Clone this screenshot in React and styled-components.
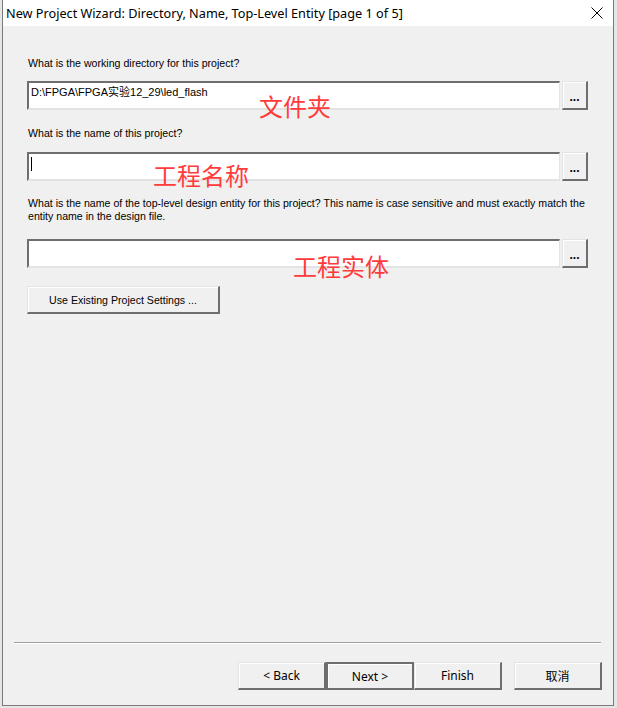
import React from "react";
import styled, { createGlobalStyle } from "styled-components";

const GlobalStyle = createGlobalStyle`
    html, body {
        margin: 0;
        padding: 0;
        background: #e6e6e6;
    }
    body {
        width: 617px;
        height: 708px;
        overflow: hidden;
    }
`

const Page = styled.div`
    padding-left: 2px;
    width: 617px;
    height: 708px;
    box-sizing: border-box;
`

const Window = styled.div`
    width: 612px;
    height: 706px;
    box-sizing: border-box;
    border: 1px solid #7a7a7a;
    border-top: none;
    background: #f0f0f0;
    display: flex;
    flex-direction: column;
    position: relative;
`

const TitleBar = styled.div`
    height: 26px;
    background: #ffffff;
    display: flex;
    align-items: center;
    justify-content: space-between;
    padding: 0 10px 0 3px;
    font-family: "Noto Sans", "Liberation Sans", sans-serif;
    font-size: 12.7px;
    color: #000;
    flex-shrink: 0;
`

const CloseIcon = styled.svg`
    width: 12px;
    height: 12px;
`

const Body = styled.div`
    flex: 1;
    display: flex;
    flex-direction: column;
    padding: 31px 0 15px 24px;
`

const Label = styled.div`
    font-family: "Liberation Sans", Arial, sans-serif;
    font-size: 10.6px;
    line-height: 13px;
    color: #000;
    width: 560px;
    margin-top: ${({ $top }) => $top}px;
    margin-left: 1px;
`

const FieldRow = styled.div`
    display: flex;
    gap: 2px;
    margin-top: ${({ $top }) => $top}px;
`

const TextBox = styled.div`
    width: 533px;
    height: 29px;
    box-sizing: border-box;
    background: #ffffff;
    border-style: solid;
    border-width: 2px 1px 2px 2px;
    border-color: #6e6e6e #e3e3e3 #e3e3e3 #6e6e6e;
    padding: 2px 0 0 2px;
    font-family: "Liberation Sans", "Noto Sans CJK SC", sans-serif;
    font-size: 11px;
    line-height: 14px;
    color: #000;
    white-space: nowrap;
`

const Caret = styled.span`
    display: inline-block;
    width: 1px;
    height: 14px;
    background: #000;
    margin-top: 1px;
`

const RaisedButton = styled.div`
    box-sizing: border-box;
    width: ${({ $w }) => $w}px;
    height: ${({ $h }) => $h || 28}px;
    background: #f0f0f0;
    border-style: solid;
    border-width: 1px 2px 2px 1px;
    border-color: #e3e3e3 #6e6e6e #6e6e6e #e3e3e3;
    box-shadow: inset 1px 1px #ffffff;
    display: flex;
    align-items: center;
    justify-content: center;
    font-family: "Liberation Sans", "Noto Sans CJK SC", sans-serif;
    font-size: 10.6px;
    color: #000;
`

const Dots = styled.span`
    font-weight: bold;
    font-size: 12px;
    margin-top: 3px;
`

const Footer = styled.div`
    margin-top: auto;
    display: flex;
    flex-direction: column;
`

const Separator = styled.div`
    margin-left: -13px;
    width: 587px;
    height: 1px;
    background: #a0a0a0;
    border-bottom: 1px solid #ffffff;
`

const ButtonRow = styled.div`
    display: flex;
    margin-top: 18px;
    padding-left: 211px;
`

const NavButton = styled.div`
    box-sizing: border-box;
    width: 88px;
    height: 28px;
    margin-left: ${({ $gap }) => $gap || 0}px;
    background: #f0f0f0;
    border-style: solid;
    border-width: ${({ $default }) => ($default ? "2px" : "1px 2px 2px 1px")};
    border-color: ${({ $default }) =>
        $default ? "#6e6e6e" : "#e3e3e3 #6e6e6e #6e6e6e #e3e3e3"};
    box-shadow: inset 1px 1px #ffffff;
    display: flex;
    align-items: center;
    justify-content: center;
    font-family: "Noto Sans", "Noto Sans CJK SC", sans-serif;
    font-size: 12px;
    color: #000;
`

const Note = styled.div`
    position: absolute;
    left: ${({ $x }) => $x}px;
    top: ${({ $y }) => $y}px;
    font-family: "Noto Sans CJK SC", sans-serif;
    font-size: 24px;
    line-height: 24px;
    color: #ff3b3b;
    white-space: nowrap;
`

const App = () => {
    return (
        <>
            <GlobalStyle/>
            <Page>
                <Window>
                    <TitleBar>
                        <span>New Project Wizard: Directory, Name, Top-Level Entity [page 1 of 5]</span>
                        <CloseIcon viewBox="0 0 12 12">
                            <path d="M0.5 0.5 L11.5 11.5 M11.5 0.5 L0.5 11.5" stroke="#000" strokeWidth="1" fill="none"/>
                        </CloseIcon>
                    </TitleBar>
                    <Body>
                        <Label $top={0}>What is the working directory for this project?</Label>
                        <FieldRow $top={11}>
                            <TextBox>D:\FPGA\FPGA实验12_29\led_flash</TextBox>
                            <RaisedButton $w={26} $h={29}><Dots>...</Dots></RaisedButton>
                        </FieldRow>
                        <Label $top={17}>What is the name of this project?</Label>
                        <FieldRow $top={12}>
                            <TextBox><Caret/></TextBox>
                            <RaisedButton $w={26} $h={29}><Dots>...</Dots></RaisedButton>
                        </FieldRow>
                        <Label $top={16}>
                            What is the name of the top-level design entity for this project? This name is case sensitive and must exactly match the entity name in the design file.
                        </Label>
                        <FieldRow $top={16}>
                            <TextBox/>
                            <RaisedButton $w={26} $h={29}><Dots>...</Dots></RaisedButton>
                        </FieldRow>
                        <FieldRow $top={18}>
                            <RaisedButton $w={193}>Use Existing Project Settings ...</RaisedButton>
                        </FieldRow>
                        <Footer>
                            <Separator/>
                            <ButtonRow>
                                <NavButton>&lt; Back</NavButton>
                                <NavButton $default>Next &gt;</NavButton>
                                <NavButton>Finish</NavButton>
                                <NavButton $gap={12}>取消</NavButton>
                            </ButtonRow>
                        </Footer>
                    </Body>
                    <Note $x={256} $y={94}>文件夹</Note>
                    <Note $x={150} $y={163}>工程名称</Note>
                    <Note $x={290} $y={254}>工程实体</Note>
                </Window>
            </Page>
        </>
    )
}

export default App;
